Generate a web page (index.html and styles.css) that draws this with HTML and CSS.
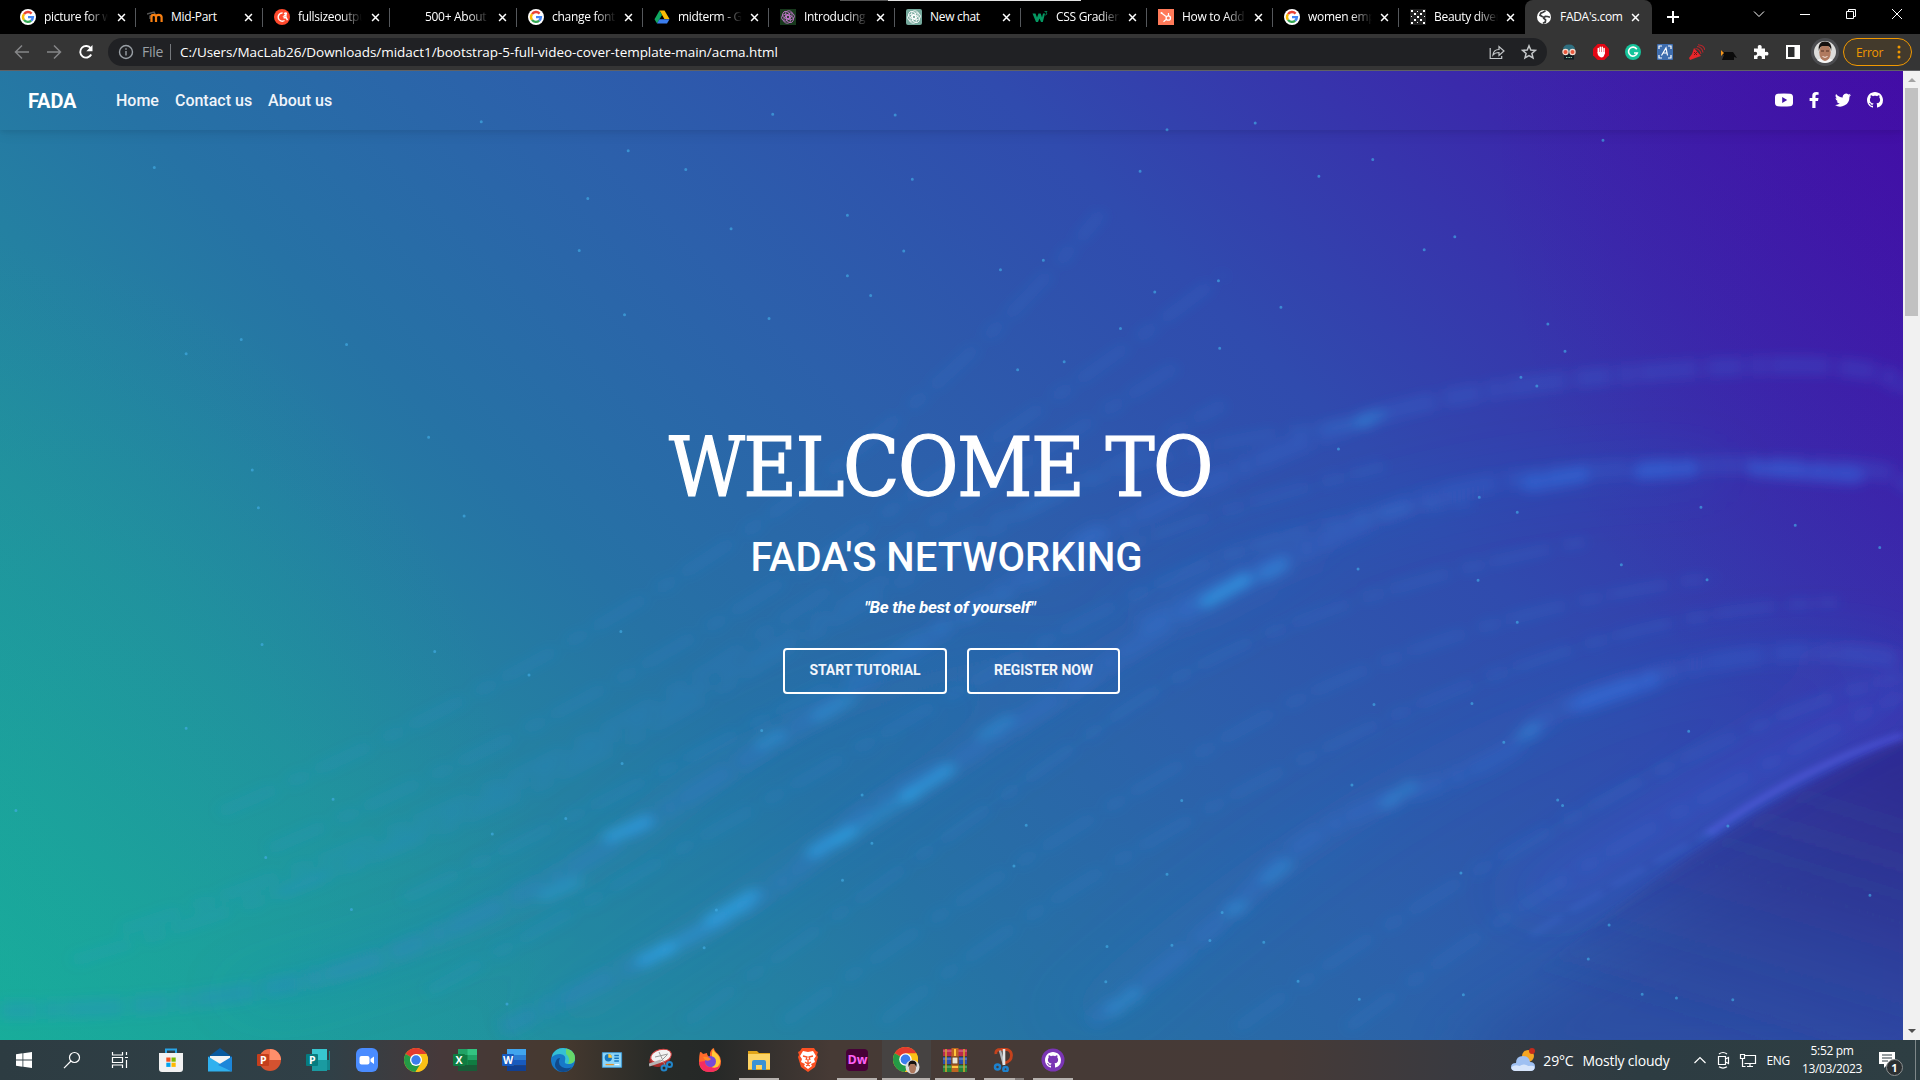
FILE: index.html
```html
<!DOCTYPE html>
<html lang="en">
<head>
<meta charset="utf-8">
<title>FADA's.com</title>
<link rel="stylesheet" href="styles.css">
</head>
<body>
<svg class="defs" width="0" height="0" aria-hidden="true">
  <symbol id="close" viewBox="0 0 10 10"><path d="M1.2 1.2l7.6 7.6M8.8 1.2L1.2 8.8" stroke="#fff" stroke-width="1.7"/></symbol>
  <symbol id="google" viewBox="0 0 16 16"><circle cx="8" cy="8" r="8" fill="#fff"/><g fill="none" stroke-width="2.4"><path d="M4 5.1A4.9 4.9 0 0 1 11.6 4.6" stroke="#ea4335"/><path d="M4 5.1a4.9 4.9 0 0 0 0 5.8" stroke="#fbbc05"/><path d="M4 10.9a4.9 4.9 0 0 0 7.2.7" stroke="#34a853"/><path d="M11.2 11.6A4.9 4.9 0 0 0 12.9 8.1H8" stroke="#4285f4"/></g></symbol>
  <symbol id="knot" viewBox="0 0 16 16"><g fill="none" stroke="currentColor" stroke-width=".8"><path id="loop" d="M8 1.800q3-.6 4 1.800v4L8.200 9.800 5.600 8.300V4Q6 2.200 8 1.800z"/><use href="#loop" transform="rotate(60 8 8)"/><use href="#loop" transform="rotate(120 8 8)"/><use href="#loop" transform="rotate(180 8 8)"/><use href="#loop" transform="rotate(240 8 8)"/><use href="#loop" transform="rotate(300 8 8)"/></g></symbol>
  <symbol id="chrome" viewBox="0 0 24 24"><circle cx="12" cy="12" r="12" fill="#fbc116"/><path d="M12 12L1.6 6A12 12 0 0 1 22.4 6z" fill="#e33b2e"/><path d="M12 12L1.6 6A12 12 0 0 0 11.5 24L17.2 15z" fill="#249a46"/><path d="M12 6h10.4a12 12 0 0 1-10.9 18l5.7-9z" fill="#fbc116"/><circle cx="12" cy="12" r="6" fill="#fff"/><circle cx="12" cy="12" r="4.7" fill="#3b7ded"/></symbol>
  <symbol id="github" viewBox="0 0 16 16"><path fill="currentColor" d="M8 0C3.58 0 0 3.58 0 8c0 3.54 2.29 6.53 5.47 7.59.4.07.55-.17.55-.38 0-.19-.01-.82-.01-1.49-2.01.37-2.53-.49-2.69-.94-.09-.23-.48-.94-.82-1.13-.28-.15-.68-.52-.01-.53.63-.01 1.08.58 1.23.82.72 1.21 1.87.87 2.33.66.07-.52.28-.87.51-1.07-1.78-.2-3.64-.89-3.64-3.95 0-.87.31-1.59.82-2.15-.08-.2-.36-1.02.08-2.12 0 0 .67-.21 2.2.82.64-.18 1.32-.27 2-.27s1.36.09 2 .27c1.53-1.04 2.2-.82 2.2-.82.44 1.1.16 1.92.08 2.12.51.56.82 1.27.82 2.15 0 3.07-1.87 3.75-3.65 3.95.29.25.54.73.54 1.48 0 1.07-.01 1.93-.01 2.2 0 .21.15.46.55.38A8.01 8.01 0 0 0 16 8c0-4.42-3.58-8-8-8z"/></symbol>
</svg>

<header class="tabstrip">
  <i class="edge-line"></i>
  <div class="tabs">
    <div class="tab wide"><svg class="fav"><use href="#google"/></svg><span class="title">picture for w</span><svg class="x"><use href="#close"/></svg></div>
    <div class="tab wide"><svg class="fav" viewBox="0 0 16 16"><path d="M0 5l7-2 1 2-5 2v3" fill="none" stroke="#555" stroke-width="1.4"/><path d="M4.500 13V8q0-2.200 2.200-2.200T9 8v5M9 13V8q0-2.200 2.600-2.200T14.600 8v5" fill="none" stroke="#f98012" stroke-width="2.200"/></svg><span class="title full">Mid-Part</span><svg class="x"><use href="#close"/></svg></div>
    <div class="tab wide"><svg class="fav" viewBox="0 0 16 16"><circle cx="8" cy="8" r="8" fill="#ff492c"/><path d="M8.600 4A4.100 4.100 0 1 0 10.500 11.500M10 4.600q2.600-1.500 2.400.4L10.200 7h2.600M9.500 8.800h2.700l1.300 2.300" fill="none" stroke="#fff" stroke-width="1.400"/></svg><span class="title">fullsizeoutpu</span><svg class="x"><use href="#close"/></svg></div>
    <div class="tab wide"><i class="fav"></i><span class="title">500+ About</span><svg class="x"><use href="#close"/></svg></div>
    <div class="tab"><svg class="fav"><use href="#google"/></svg><span class="title">change font</span><svg class="x"><use href="#close"/></svg></div>
    <div class="tab"><svg class="fav" viewBox="0 0 16 16"><path d="M5.500 1.500h5L15.500 10H10.400z" fill="#fbbc05"/><path d="M5.500 1.500L8 5.900 3 14.500.5 10.200z" fill="#11a861"/><path d="M5.400 10.200h10.100L13 14.500H3z" fill="#3b7ded"/></svg><span class="title">midterm - G</span><svg class="x"><use href="#close"/></svg></div>
    <div class="tab"><svg class="fav purple"><use href="#knot"/></svg><span class="title">Introducing</span><svg class="x"><use href="#close"/></svg></div>
    <div class="tab"><svg class="fav mint"><use href="#knot"/></svg><span class="title full">New chat</span><svg class="x"><use href="#close"/></svg></div>
    <div class="tab"><svg class="fav" viewBox="0 0 16 16"><path d="M.5 4.500h3L5 8.500 6.500 4.500h2.200L10 8.500l1-4h2l-2.200 8.500H9L7.500 9.500 6 13H4z" fill="#059862"/><path d="M12.500 2.500h2.500l-1.200 1.500q1.600.2.800 1.500-.8.8-2 .2" fill="none" stroke="#059862" stroke-width=".8"/></svg><span class="title">CSS Gradien</span><svg class="x"><use href="#close"/></svg></div>
    <div class="tab"><svg class="fav" viewBox="0 0 16 16"><path d="M0 0h16v16H0z" fill="#ff7a59"/><path d="M3.500 4l4.500 3.500M10.500 4v3M8 10.500L5.500 12.800" stroke="#fff" stroke-width="1.200"/><circle cx="10.300" cy="9" r="2.200" fill="none" stroke="#fff" stroke-width="1.300"/><circle cx="3.500" cy="4" r="1" fill="#fff"/></svg><span class="title">How to Add</span><svg class="x"><use href="#close"/></svg></div>
    <div class="tab"><svg class="fav"><use href="#google"/></svg><span class="title">women emp</span><svg class="x"><use href="#close"/></svg></div>
    <div class="tab last"><svg class="fav" viewBox="0 0 16 16"><path d="M0 0h16v16H0z" fill="#202020"/><path d="M1 1h2v2H1zM13 1h2v2h-2zM4 4h2v2H4zM10 4h2v2h-2zM7 7h2v2H7zM4 10h2v2H4zM10 10h2v2h-2zM1 13h2v2H1zM13 13h2v2h-2zM1 7h1v1H1zM14 7h1v1h-1zM7 2h1v1H7zM7 13h1v1H7z" fill="#fff"/></svg><span class="title">Beauty diver</span><svg class="x"><use href="#close"/></svg></div>
    <div class="tab active"><svg class="fav" viewBox="0 0 16 16"><circle cx="8" cy="8" r="7" fill="#fff"/><path d="M9.500 1.800L7 3.200 4.800 4.200 4 6.300l2.500 1.500 2.700.4M14 8.300l-2.500-.8-2.200-.2-1.500 2 1.800 1.500-.3 2.300L7 14.300" fill="none" stroke="#3a3b3c" stroke-width="1.700"/></svg><span class="title full">FADA's.com</span><svg class="x"><use href="#close"/></svg></div>
  </div>
  <svg class="plus" viewBox="0 0 12 12"><path d="M6 0v12M0 6h12" stroke="#fff" stroke-width="2"/></svg>
  <div class="winctl">
    <svg viewBox="0 0 12 12"><path d="M1 3.500l5 5 5-5" /></svg>
    <svg viewBox="0 0 12 12"><path d="M1 6.500h10"/></svg>
    <svg viewBox="0 0 12 12"><path d="M1.500 3.500h7v7h-7zM3.500 3.500v-2h7v7h-2"/></svg>
    <svg viewBox="0 0 12 12"><path d="M1 1l10 10M11 1L1 11"/></svg>
  </div>
</header>

<div class="toolbar">
  <svg class="nav dim" viewBox="0 0 16 16"><path d="M15 8H2M8 1.500L1.500 8 8 14.500"/></svg>
  <svg class="nav dim" viewBox="0 0 16 16"><path d="M1 8h13M8 1.500L14.500 8 8 14.500"/></svg>
  <svg class="nav" viewBox="0 0 16 16"><path d="M13.200 10.500A5.800 5.800 0 1 1 12.800 4.500"/><path d="M14.500 1v6.200H8.300z" fill="#fff" stroke="none"/></svg>
  <div class="omnibox">
    <svg class="info" viewBox="0 0 16 16"><circle cx="8" cy="8" r="6.500"/><path d="M8 7v4.500M8 4.200v1.600"/></svg>
    <span class="scheme">File</span>
    <span class="url">C:/Users/MacLab26/Downloads/midact1/bootstrap-5-full-video-cover-template-main/acma.html</span>
    <svg class="act" viewBox="0 0 16 16"><path d="M1.200 4v10.500h11.500v-2.500M4 11q.5-5.500 6-5.500V2.500l5 4.500-5 4.500V8.500q-4 0-6 2.500z"/></svg>
    <svg class="act star" viewBox="0 0 16 16"><path d="M8 1.800l1.800 4.200 4.600.4-3.500 3 1.100 4.500-4-2.400-4 2.400 1.100-4.500-3.500-3 4.600-.4z"/></svg>
  </div>
  <div class="exts">
    <svg viewBox="0 0 16 16"><path d="M2 6q0-5.500 6-5.500T14 6v2H2z" fill="#2f6f80"/><path d="M3 9h10v6.500H3z" fill="#101c22"/><circle cx="4.500" cy="8" r="2.600" fill="#e9583c" stroke="#f7ddd0" stroke-width="1.200"/><circle cx="11.500" cy="8" r="2.600" fill="#e9583c" stroke="#f7ddd0" stroke-width="1.200"/><path d="M5 13.500h6" stroke="#9db" stroke-dasharray="1 .6"/></svg>
    <svg viewBox="0 0 16 16"><path d="M4.700 0h6.600L16 4.700v6.600L11.300 16H4.700L0 11.300V4.700z" fill="#e30613"/><path d="M5.300 4.500v4M7.300 3.200v5M9.300 3.200v5M11.100 4.500v5" stroke="#fff" stroke-width="1.500" stroke-linecap="round"/><path d="M4.600 8h7.200q0 5.500-3.800 5.500Q5.500 13 4.600 10z" fill="#fff"/></svg>
    <svg viewBox="0 0 16 16"><circle cx="8" cy="8" r="8" fill="#15c39a"/><path d="M11.800 5.200A4.500 4.500 0 1 0 12.300 9H9" fill="none" stroke="#fff" stroke-width="1.600"/></svg>
    <svg viewBox="0 0 16 16"><rect width="16" height="16" rx="1" fill="#3e6dae"/><path d="M2 5V2h3M11 2h3v3M2 11v3h3M11 14h3v-3M4.500 11.500L9 4l1.500 7.500M6.500 9H10" fill="none" stroke="#fff" stroke-width="1.200"/></svg>
    <svg viewBox="0 0 16 16"><path d="M5 4l7 8-3 1-8 3-1-2 3-4z" fill="#e8262b"/><path d="M6.500 4.500Q11 5 12 10M8 2.500q5 .5 6 6M9 .7q6 .3 6.800 5.300" fill="none" stroke="#b8262b" stroke-width="1.100"/><path d="M5 8l3 3M8 8l-3 3" stroke="#701114"/></svg>
    <svg viewBox="0 0 16 16"><path d="M0 6l3 2h9l4 6-3-1v3H1l2-5-3-1z" fill="#0b0b0b"/><path d="M0 6l3 3-3 3z" fill="#f3961c"/></svg>
    <svg viewBox="0 0 16 16"><path d="M1 4.500h4Q4 1 6.700 1t1.800 3.500H12V8q3.500-1 3.500 1.700T12 11.300V15H8.700q.8-3.300-2-3.300T4.500 15H1v-3.700q3.200.5 3.200-1.700T1 8z" fill="#fff"/></svg>
    <svg viewBox="0 0 16 16"><path d="M1 1h14v14H1z" fill="#fff"/><path d="M3 3h6.500v10H3z" fill="#2c2d2f"/></svg>
    <svg class="avatar" viewBox="0 0 28 28"><circle cx="14" cy="14" r="14" fill="#4b4c4f"/><circle cx="14" cy="14" r="11" fill="#dcdcda"/><path d="M6 22q8-5 16 0-8 6-16 0z" fill="#f5f5f5"/><ellipse cx="14" cy="14.500" rx="5.700" ry="8.500" fill="#b07a5f"/><path d="M7.800 13Q6.500 3.500 14 3.500T20.200 13q-.5-4-3-5H11Q8.500 9 7.800 13z" fill="#16110f"/><path d="M10 13h3M15 13h3" stroke="#47281e" stroke-width=".9"/><path d="M11.500 18.500q2.500 1.800 5 0" stroke="#f5e4dc" fill="none"/></svg>
  </div>
  <div class="error"><span>Error</span><svg viewBox="0 0 4 14"><circle cx="2" cy="2" r="1.500"/><circle cx="2" cy="7" r="1.500"/><circle cx="2" cy="12" r="1.500"/></svg></div>
</div>

<main class="view">
  <section class="page">
    <svg class="video" viewBox="0 2 1554 1566" preserveAspectRatio="none" aria-hidden="true">
      <defs>
        <filter id="soft" x="-10%" y="-10%" width="120%" height="120%"><feGaussianBlur stdDeviation="5 9"/></filter>
        <filter id="rim" x="-10%" y="-10%" width="120%" height="120%"><feGaussianBlur stdDeviation="3 5"/></filter>
        <filter id="wide" x="-20%" y="-20%" width="140%" height="140%"><feGaussianBlur stdDeviation="26 40"/></filter>
        <linearGradient id="planet" gradientUnits="userSpaceOnUse" x1="1554" y1="1150" x2="1330" y2="1520"><stop offset="0" stop-color="#2d2787" stop-opacity=".65"/><stop offset=".45" stop-color="#2d3088" stop-opacity=".45"/><stop offset="1" stop-color="#2c4a95" stop-opacity="0"/></linearGradient>
      </defs>
      <path d="M1200 1568Q1390 1330 1600 1120V1620H1200z" fill="#2c3a92" opacity=".35" filter="url(#wide)"/>
      <path d="M1230 1500Q1420 1170 1600 1050V1700H1200z" fill="url(#planet)" filter="url(#rim)"/>
      <g class="haze" filter="url(#wide)">
        <path d="M200 1500Q420 1400 540 1200T850 950"/><path d="M450 1540Q650 1290 820 1060T1060 790"/><path d="M880 1540Q1080 1190 1260 1040T1554 960"/><path d="M950 880Q1150 640 1400 650"/><path class="violet" d="M1250 1350Q1380 1180 1554 1000"/>
      </g>
      <g class="streaks" filter="url(#soft)">
        <path class="faint" d="M180 1200Q420 1000 600 760T900 230"/>
        <path class="faint" d="M220 1260Q460 1060 660 800T1000 330"/>
        <path class="faint" d="M100 1390Q400 1200 600 940T960 480"/>
        <path class="faint" d="M60 1440Q380 1250 590 1000T1000 540"/>
        <path class="faint" d="M230 1330Q500 1100 700 850T1120 570"/>
        <path class="faint" d="M330 1340Q570 1110 740 930T1130 640"/>
        <path class="faint" d="M350 1490Q620 1190 830 950T1200 700"/>
        <path class="faint" d="M560 1540Q760 1260 900 1060T1300 760"/>
        <path class="faint" d="M640 1540Q840 1260 1010 1070T1400 820"/>
        <path class="faint" d="M720 1540Q880 1290 1100 1080T1500 860"/>
        <path class="faint" d="M1010 1550Q1150 1350 1300 1190T1554 980"/>
        <path class="faint" d="M1100 1550Q1250 1330 1380 1190T1554 1010"/>
        <path class="mid" d="M0 1520Q210 1520 330 1420T520 1225Q640 1080 720 970T900 740"/>
        <path class="mid" d="M410 1550L530 1435Q630 1340 670 1260T770 1130Q830 1060 920 940T1050 800"/>
        <path class="mid" d="M890 1540Q990 1400 1030 1310T1150 1170 1250 1070 1370 970 1554 955"/>
        <path class="mid" d="M880 770Q1010 640 1100 575T1370 485 1554 520"/>
        <path class="mid" d="M930 900Q1070 770 1140 710T1390 640 1554 680"/>
        <path class="glow" d="M498 1240L528 1215M664 1265l30-34M740 1175l35-45M525 1440l22-22M580 1375l35-42M985 860l32-36"/>
        <path class="glow dimmer" d="M622 1090l14-14M668 1045l25-28M445 1335l25-22M803 1076l20-25M1004 1360l10-10M1132 1185l20-28M1243 1078l10-15M1110 570l15-12M1035 1308l16-24M908 1520l20-28M1032 818l15-18M540 1425l70-75M685 1245l60-75"/>
        <path class="glow blue" d="M1290 1025l58-38M1250 670l40-15M1340 650l40-5M1435 645l80 12"/>
      </g>
      <path class="globe" filter="url(#rim)" d="M1395 1235Q1470 1128 1554 1075"/>
      <path class="globe thin-rim" filter="url(#rim)" d="M1250 1400Q1320 1310 1400 1230"/>
      <path class="dots" d="M513 131h0M560 161h0M631 72h0M393 84h0M731 73h0M953 97h0M1025 86h0M1121 145h0M1309 114h0M931 164h0M1077 172h0M745 177h0M126 158h0M480 208h0M597 257h0M692 235h0M473 292h0M738 293h0M852 308h0M817 323h0M1188 270h0M1163 291h0M692 333h0M711 365h0M995 341h0M628 402h0M510 396h0M943 359h0M1046 384h0M1264 411h0M915 418h0M197 436h0M283 444h0M152 459h0M996 450h0M869 472h0M831 485h0M1278 455h0M1242 497h0M1255 511h0M350 594h0M206 647h0M211 708h0M379 721h0M1208 691h0M1093 613h0M1389 707h0M1466 736h0M1239 715h0M1535 772h0M1324 800h0M1394 824h0M1207 825h0M1109 807h0M214 929h0M355 940h0M507 908h0M432 978h0M1239 893h0M152 1064h0M622 1068h0M508 1121h0M1122 1026h0M1202 1024h0M1379 1069h0M1228 1087h0M13 1197h0M272 1179h0M462 1210h0M402 1235h0M704 1172h0M838 1221h0M965 1181h0M1104 1156h0M1272 1180h0M1276 1189h0M1411 1222h0M217 1273h0M828 1287h0M688 1310h0M287 1357h0M953 1300h0M1193 1298h0M585 1358h0M712 1250h0M998 1362h0M988 1407h0M904 1417h0M575 1419h0M957 1415h0M1032 1410h0M1314 1382h0M1527 1334h0M1415 1503h0M1195 1495h0M1341 1494h0M1369 1500h0M1060 1473h0M903 1474h0M1110 1502h0M1297 1437h0M414 1510h0"/>
    </svg>
    <nav class="navbar">
      <a class="brand">FADA</a><a class="link">Home</a><a class="link">Contact us</a><a class="link">About us</a>
      <div class="social">
        <svg width="18" height="14" viewBox="0 0 18 14"><path fill-rule="evenodd" d="M3 .8Q9 0 15 .8 18 1 18 4v6q0 3-3 3.200-6 .8-12 0Q0 13 0 10V4Q0 1 3 .8zM7.200 4v6l5-3z" fill="#fff"/></svg>
        <svg width="10" height="16" viewBox="0 0 10 16"><path d="M9 9l.5-3H6.500V4.200q0-1.400 1.500-1.400h1.600V.3Q3.300-1 3.300 3.800V6H.6v3h2.700v7h3.200V9z" fill="#fff"/></svg>
        <svg width="16" height="16" viewBox="0 0 16 16"><path d="M14.400 4.700c.6-.4 1.100-1 1.600-1.700-.6.300-1.200.4-1.900.5.700-.4 1.200-1 1.400-1.800-.6.400-1.300.6-2.100.8A3.300 3.300 0 0 0 7.800 5.500 9.300 9.300 0 0 1 1.100 2a3.300 3.300 0 0 0 1 4.400c-.5 0-1-.2-1.500-.4 0 1.600 1.100 2.900 2.600 3.200-.5.100-1 .2-1.500.1a3.300 3.300 0 0 0 3.100 2.300A6.600 6.600 0 0 1 0 13a9.300 9.300 0 0 0 14.400-8.300z" fill="#fff"/></svg>
        <svg width="16" height="16"><use href="#github"/></svg>
      </div>
    </nav>
    <div class="hero">
      <h1>WELCOME TO</h1>
      <h2>FADA'S NETWORKING</h2>
      <p class="tagline">"Be the best of yourself"</p>
      <div class="buttons"><a class="btn tutorial">START TUTORIAL</a><a class="btn register">REGISTER NOW</a></div>
    </div>
  </section>
  <aside class="scrollbar"><i class="up"></i><i class="thumb"></i><i class="down"></i></aside>
</main>

<footer class="taskbar">
  <div class="sys">
    <svg viewBox="0 0 16 16" width="16" height="18"><path d="M0 2.200l6.500-.9v6.300H0zM7.300 1.200L16 0v7.600H7.300zM0 8.400h6.500v6.300L0 13.800zM7.300 8.400H16V16l-8.700-1.200z" fill="#fff"/></svg>
    <svg viewBox="0 0 18 18" width="18" height="18" class="thin"><circle cx="11.500" cy="6.500" r="5"/><path d="M8 10L1 17.200"/></svg>
    <svg viewBox="0 0 18 18" width="18" height="18" class="thin"><path d="M1.500 1v3h10V1M1.500 17v-3h10v3M1.500 6.500h10v5h-10zM15.500 1v3M15.500 9v8M14 6.500h3" /></svg>
  </div>
  <div class="apps">
    <span class="app"><svg viewBox="0 0 24 24"><path d="M7 7V1.500h10V7" fill="none" stroke="#29a5e8" stroke-width="2"/><path d="M0 5h24v16q0 3-3 3H3q-3 0-3-3z" fill="#f2f2f2"/><path d="M7.300 9.500h4.200v4.200H7.300z" fill="#f25022"/><path d="M12.500 9.500h4.200v4.200h-4.200z" fill="#7fba00"/><path d="M7.300 14.700h4.200v4.200H7.300z" fill="#00a4ef"/><path d="M12.500 14.700h4.200v4.200h-4.200z" fill="#ffb900"/></svg></span>
    <span class="app"><svg viewBox="0 0 24 24"><path d="M0 9L12 0l12 9v14H0z" fill="#0a5a9e"/><path d="M2 8h20v8H2z" fill="#f4f4f4"/><path d="M0 8.500L14 17 24 23.500H0z" fill="#2fb1ef"/><path d="M24 8.500L10 17l14 6.500z" fill="#1c86d9"/></svg></span>
    <span class="app"><svg viewBox="0 0 24 24"><circle cx="13" cy="12" r="11" fill="#d35230"/><path d="M13 1a11 11 0 0 1 11 11H13z" fill="#ff8f6b"/><path d="M13 1v11H2A11 11 0 0 1 13 1z" fill="#ed6c47"/><rect y="6" width="12" height="12" rx="1" fill="#c43e1c"/><text x="3" y="15.500">P</text></svg></span>
    <span class="app"><svg viewBox="0 0 24 24"><path d="M6 1h15v11H6z" fill="#37c6d0"/><path d="M9 12h14V3h1v19H9z" fill="#12888f"/><path d="M6 12h15v11H6z" fill="#1a9ba1"/><rect y="6" width="12" height="12" rx="1" fill="#067c80"/><text x="3" y="15.500">P</text></svg></span>
    <span class="app"><svg viewBox="0 0 24 24"><rect x="1" width="22" height="24" rx="6" fill="#4a8cff"/><rect x="4.500" y="8" width="10" height="8.500" rx="2" fill="#fff"/><path d="M15.500 11L19 8.500v7.500l-3.500-2.500z" fill="#fff"/></svg></span>
    <span class="app"><svg><use href="#chrome"/></svg></span>
    <span class="app"><svg viewBox="0 0 24 24"><path d="M5 1h19v22H5z" fill="#21a366"/><path d="M14.500 1H24v6h-9.500z" fill="#33c481"/><path d="M5 7h9.500v10H5z" fill="#107c41"/><path d="M5 17h19v6H5z" fill="#185c37"/><path d="M14.500 12H24v5h-9.500z" fill="#107c41"/><rect y="6" width="12" height="12" rx="1" fill="#107c41"/><text x="2.500" y="15.500">X</text></svg></span>
    <span class="app"><svg viewBox="0 0 24 24"><path d="M5 1h19v6H5z" fill="#41a5ee"/><path d="M5 7h19v5H5z" fill="#2b7cd3"/><path d="M5 12h19v5.500H5z" fill="#185abd"/><path d="M5 17.500h19V23H5z" fill="#103f91"/><rect y="6" width="12" height="12" rx="1" fill="#185abd"/><text x="1" y="15.500">W</text></svg></span>
    <span class="app"><svg viewBox="0 0 24 24"><circle cx="12" cy="12" r="12" fill="#1779c8"/><path d="M1 8Q4 0 12 0q11 0 12 10 0 6-7 6-4 0-3-3 2-6-5-7Q4 6 1 9z" fill="#35c1d4"/><path d="M15 .5q9 2 9 10 0 5-7 5.500 3-6-2-10z" fill="#66d86a"/><path d="M9 10q-3 6 2 9 5 2.500 10 0-5 7-13 4-6-4-3-10 1-3 4-3z" fill="#114a8b"/></svg></span>
    <span class="app"><svg class="card" viewBox="0 0 24 24"><path d="M1.500 4h21v16h-21z" fill="#8ed6fa" stroke="#3e9edb"/><circle cx="8" cy="9.500" r="4" fill="#1677bf"/><path d="M8 9.500v-4a4 4 0 0 1 4 4z" fill="#ffc83d"/><path d="M14.500 7h5M14.500 10h5M14.500 13h5" stroke="#1677bf" stroke-width="1.600"/><path d="M5 17h9" stroke="#e5932c" stroke-width="1.400"/><path d="M15 17h5" stroke="#fff"/></svg></span>
    <span class="app"><svg viewBox="0 0 24 24"><ellipse cx="11" cy="11" rx="11" ry="7.500" fill="#a52d2b" transform="rotate(-18 11 11)"/><ellipse cx="12" cy="8" rx="10.500" ry="6.500" fill="#f3f3f3" stroke="#d34140" transform="rotate(-15 12 8)"/><path d="M6 9l13-3M10 4l6 13M18 7l-8 8" stroke="#999"/><path d="M0 17l12-4" stroke="#b5b5b5" stroke-width="3"/><g fill="none" stroke="#2185c9" stroke-width="2"><circle cx="15" cy="20" r="2.500"/><circle cx="20.500" cy="16.500" r="2.500"/></g></svg></span>
    <span class="app"><svg viewBox="0 0 24 24"><path d="M2 4q2 0 3 2l4-1q0 3 3 4V5q1-4 4-5 0 3 4 6 3 3 3 7 0 11-11 11T1 13Q1 8 2 4z" fill="#ff6a2b"/><path d="M15 0q0 3 4 6 4 4 3 9-3 7-8 5V5z" fill="#ffca36"/><path d="M1 14q1 10 11 10 7 0 10-6-5 3-9 1-6 1-6-6z" fill="#f52c61"/><circle cx="12.500" cy="13.500" r="5.500" fill="#7849d7"/><path d="M5 9q5-1 8 2-2 3-6 1z" fill="#ff8a27"/></svg></span>
    <span class="app run"><svg viewBox="0 0 24 24"><path d="M1 3h9l2 2h11v17H1z" fill="#e2a51a"/><path d="M1 6h22v15H1z" fill="#fdd465"/><path d="M5 22v-8q0-2 2-2h10q2 0 2 2v8h-4v-5H9v5z" fill="#3b92d4"/></svg></span>
    <span class="app"><svg viewBox="0 0 24 24"><path d="M6 0h12l2 3 2 1-1 3 1 2-3 10-7 5-7-5L2 9l1-2-1-3 2-1z" fill="#fb5123"/><path d="M12 4l5-1 3 5-2 3 1 3-4 2 1 2-4 3-4-3 1-2-4-2 1-3-2-3 3-5z" fill="#fff"/><path d="M7 8l4 1-1 3M17 8l-4 1 1 3M12 11v4M9 14l3 2 3-2M10 18l2-1 2 1" fill="none" stroke="#fb5123" stroke-width="1.300"/></svg></span>
    <span class="app run"><svg viewBox="0 0 24 24"><rect x="1" y="1" width="22" height="22" rx="4" fill="#470137"/><text class="dw" x="2.500" y="16">Dw</text></svg></span>
    <span class="app run current"><svg viewBox="0 0 28 28" class="big"><use href="#chrome" x="1" y="1" width="25" height="25"/><circle cx="20.500" cy="21" r="7" fill="#ddd"/><ellipse cx="20.500" cy="22" rx="3.500" ry="5.500" fill="#ad795f"/><path d="M16.500 21q-1-6.500 4-6.500t4 6.500l-2-3h-4z" fill="#17110e"/></svg></span>
    <span class="app run"><svg viewBox="0 0 24 24"><path d="M0 1h24v7H0z" fill="#b9294e"/><path d="M0 9h24v7H0z" fill="#294fb0"/><path d="M0 17h24v7H0z" fill="#25833a"/><path d="M0 3h24M0 11h24M0 19h24" stroke="#ffffff66"/><path d="M3 1v23M21 1v23" stroke="#d3a52c" stroke-width="1.500"/><path d="M8.500 0h7v24h-7z" fill="#bd6421"/><path d="M9 9h6v7H9z" fill="#e9e4d4" stroke="#6c3a14"/><path d="M12 1v7M9 19h6" stroke="#ffc53d" stroke-width="2"/></svg></span>
    <span class="app run split"><svg viewBox="0 0 24 24"><path d="M4 6Q3 1.500 9 1.500q10-1.500 10.500 5.500 0 7-7.500 8" fill="none" stroke="#c5421c" stroke-width="2.800"/><path d="M8 2.500l4 14.500" stroke="#aeb4b8" stroke-width="2.400"/><path d="M12 1v16" stroke="#e3e6e8" stroke-width="2.600"/><g fill="none" stroke="#1d82cf" stroke-width="2.500"><circle cx="5.500" cy="19" r="2.500"/><circle cx="13.500" cy="21.200" r="2.200"/></g></svg></span>
    <span class="app run"><svg viewBox="0 0 24 24" class="hub"><circle cx="12" cy="12" r="11.500" fill="#7a35b4"/><use href="#github" x="4" y="4" width="16" height="16"/></svg></span>
  </div>
  <div class="weather"><svg viewBox="0 0 24 24"><circle cx="17" cy="8" r="6" fill="#f5a623"/><circle cx="21" cy="3" r="3" fill="#c42b1c"/><path d="M5 23q-5 0-5-4t5-4q0-7 7-7 6 0 7 6 5 0 5 4.500T19 23z" fill="#9fc0f2"/><path d="M4 23q-4-1-3.500-4 4-3 8-1 4-3 9 0 5-1 6 1 0 4-4.500 4z" fill="#d7e5fb"/></svg><span>29°C</span><span>Mostly cloudy</span></div>
  <div class="tray">
    <svg class="thin" viewBox="0 0 14 14"><path d="M1.500 10L7 4.500l5.500 5.500"/></svg>
    <svg class="thin" viewBox="0 0 14 18"><path d="M2.500 5.500h7v8h-7zM9.500 8l3-1.500v6l-3-1.500M3 3q4-3 8 0M3 15.800q4 2.500 8 0"/></svg>
    <svg class="thin" viewBox="0 0 18 16"><path d="M5.500 3.500h11v8h-11M8 14.500h6M11 11.500v3M1.500 2.500h4v4h-4zM3.500 6.500v8h3"/></svg>
    <span>ENG</span>
  </div>
  <div class="clock"><span>5:52 pm</span><span>13/03/2023</span></div>
  <div class="notice"><svg viewBox="0 0 26 26"><path d="M1 2h16v12H10l-4 4v-4H1z" fill="#fff"/><path d="M4 5h10M4 8h10M4 11h6" stroke="#2c3a40"/></svg><b>1</b></div>
</footer>
</body>
</html>
```
FILE: styles.css
```css
* { box-sizing: border-box; }
html, body { margin: 0; width: 1920px; height: 1080px; overflow: hidden; background: #000; }
body { display: flex; flex-direction: column; font-family: "Open Sans", "Noto Sans", sans-serif; color: #fff; }
svg { flex: none; display: block; }
.defs { position: absolute; }

/* browser tabs */
.tabstrip { position: relative; height: 34px; flex: none; display: flex; background: #000; }
.edge-line { position: absolute; left: 840px; top: 0; width: 241px; height: 1px; background: linear-gradient(90deg, #555 48px, #e4e4e4 48px); }
.tabs { display: flex; padding-left: 9px; }
.tab { width: 126px; height: 34px; display: flex; align-items: center; padding: 0 10px 0 11px; position: relative; }
.tab.wide { width: 127px; }
.tab::after { content: ""; position: absolute; right: 0; top: 8px; width: 1px; height: 19px; background: #55585c; }
.tab.last::after, .tab.active::after { display: none; }
.fav { width: 16px; height: 16px; margin-right: 8px; flex: none; }
.purple { background: #17381c; color: #c277cc; }
.mint { background: #75a99c; color: #fff; border-radius: 2px; }
.title { width: 66px; overflow: hidden; white-space: nowrap; font-size: 12px; line-height: 18px; letter-spacing: -.3px; -webkit-mask-image: linear-gradient(90deg, #000 65%, transparent 97%); mask-image: linear-gradient(90deg, #000 65%, transparent 97%); }
.title.full { -webkit-mask-image: none; mask-image: none; }
.x { width: 9px; height: 9px; margin-left: auto; }
.tab.active { width: 127px; background: #353535; border-radius: 8px 8px 0 0; padding: 0 12px 0 11px; }
.plus { width: 12px; height: 12px; margin: 11px 0 0 15px; }
.winctl { margin-left: auto; display: flex; gap: 34px; padding: 8px 17px 0 0; }
.winctl svg { width: 12px; height: 12px; fill: none; stroke: #fff; }

/* address row */
.toolbar { height: 37px; flex: none; display: flex; align-items: center; background: #353535; border-bottom: 1px solid #606164; padding: 0 8px 0 14px; }
.nav { width: 16px; height: 16px; margin-right: 16px; fill: none; stroke: #fff; stroke-width: 1.900; }
.nav.dim { stroke: #858688; stroke-width: 1.500; }
.toolbar .nav:nth-child(3) { margin-right: 14px; }
.omnibox { width: 1439px; height: 28px; border-radius: 14px; background: #202124; display: flex; align-items: center; padding: 0 10px; }
.info { width: 16px; height: 16px; fill: none; stroke: #9aa0a6; stroke-width: 1.400; }
.scheme { font-size: 14px; line-height: 15px; color: #9aa0a6; margin-left: 8px; width: 29px; border-right: 1px solid #75787c; height: 16px; letter-spacing: -.3px; }
.url { font-size: 13.500px; line-height: 18px; margin-left: 9px; white-space: nowrap; letter-spacing: -.04px; }
.act { width: 16px; height: 16px; margin-left: auto; fill: none; stroke: #c4c7c9; stroke-width: 1.200; }
.star { margin-left: 16px; stroke-width: 1.500; }
.exts { display: flex; align-items: center; gap: 16px; padding-left: 14px; }
.exts svg { width: 16px; height: 16px; }
.exts .avatar { width: 28px; height: 28px; margin-left: -6px; }
.error { margin-left: auto; width: 69px; height: 28px; border: 1px solid #f29900; border-radius: 14px; background: #433a2c; color: #f29900; font-size: 12px; display: flex; align-items: center; justify-content: space-between; padding: 0 10px 0 12px; letter-spacing: -.3px; }
.error svg { width: 4px; height: 14px; fill: #f29900; }

/* web page */
.view { flex: 1; display: flex; min-height: 0; }
.page { flex: 1; position: relative; display: flex; flex-direction: column; overflow: hidden; font-family: Roboto, sans-serif;
  background: radial-gradient(ellipse 420px 700px at 100% 0, rgba(68,6,165,.3), transparent), radial-gradient(ellipse 560px 800px at 0 100%, rgba(20,180,150,.35), transparent), linear-gradient(45deg, #1aa99d 0%, #228e9f 20%, #2672a5 37%, #2c60ab 52%, #304bae 68%, #3a2aab 84%, #420fa6 100%); }
.video { position: absolute; left: 0; top: 0; width: 100%; height: 100%; }
.haze path { fill: none; stroke: #2c78cc; stroke-width: 50; opacity: .15; }
.haze .violet { stroke: #4450dd; opacity: .3; }
.streaks path { fill: none; stroke: #3b8ee0; vector-effect: non-scaling-stroke; }
.streaks .faint { stroke-width: 12; opacity: .13; stroke-dasharray: 60 14 22 8; }
.streaks .mid { stroke: #3b7fe0; stroke-width: 19; opacity: .2; stroke-dasharray: 38 6 16 4 60 8; }
.streaks .glow { stroke: #31a5ea; stroke-width: 13; opacity: .6; stroke-linecap: round; }
.streaks .dimmer { opacity: .32; }
.streaks .blue { stroke: #347cec; opacity: .35; stroke-width: 18; }
.globe { fill: none; stroke: #5b63ee; stroke-width: 9; opacity: .5; }
.thin-rim { stroke: #4a7be6; stroke-width: 7; opacity: .2; stroke-dasharray: 40 12; }
.dots { fill: none; stroke: #43aee6; stroke-width: 3; stroke-linecap: round; vector-effect: non-scaling-stroke; opacity: .65; }
.navbar { position: relative; height: 59px; flex: none; display: flex; align-items: center; padding: 0 20px 0 28px; box-shadow: 0 4px 12px rgba(0,0,0,.07), 0 2px 4px rgba(0,0,0,.05); }
.brand { font-size: 20px; font-weight: 700; letter-spacing: -.1px; width: 88px; padding-top: 1px; }
.link { font-size: 16px; font-weight: 500; margin-right: 16px; color: #f0f4fa; }
.social { margin: 0 0 2px auto; display: flex; align-items: center; gap: 16px; color: #fff; }
.hero { position: relative; display: flex; flex-direction: column; align-items: center; padding-top: 289px; text-align: center; }
h1, h2, p { margin: 0; white-space: nowrap; }
h1 { font: 400 82px/98px "DejaVu Serif Condensed", "DejaVu Serif", serif; font-stretch: condensed; letter-spacing: -1.500px; margin-right: 22px; -webkit-text-stroke: 1.200px #fff; }
h2 { font-size: 40px; font-weight: 500; line-height: 48px; margin: 17px 10px 0 0; }
.tagline { font-size: 17px; font-weight: 700; font-style: italic; line-height: 24px; margin: 13px 3px 0 0; letter-spacing: -.3px; }
.buttons { display: flex; gap: 20px; margin-top: 29px; }
.btn { height: 46px; border: 2px solid #fff; border-radius: 4px; font-size: 14px; font-weight: 700; line-height: 41px; color: #f2f5fb; letter-spacing: -.08px; }
.tutorial { width: 164px; }
.register { width: 153px; }
.scrollbar { width: 17px; background: #f1f1f1; display: flex; flex-direction: column; align-items: center; }
.up, .down { border: 4px solid transparent; }
.up { border-bottom-color: #a3a3a3; border-top: 0; margin: 7px 0 6px; }
.thumb { width: 13px; height: 228px; background: #c1c1c1; }
.down { border-top-color: #505050; border-bottom: 0; margin: auto 0 7px; }

/* desktop taskbar */
.taskbar { height: 40px; flex: none; display: flex; align-items: center; background: linear-gradient(90deg, #2d3c42 0, #304047 330px, #46393a 440px, #46392f 560px, #272a27 660px, #252827 710px, #463a35 830px, #463a37 1280px, #3a3a40 1450px, #2d3c42 1640px, #2e3e43 100%); }
.thin { fill: none; stroke: #fff; stroke-width: 1.200; }
.sys { width: 146px; display: flex; justify-content: space-between; padding: 0 17px 0 16px; }
.apps { display: flex; height: 40px; }
.app { width: 49.050px; height: 40px; display: grid; place-items: center; position: relative; }
.app svg { width: 24px; height: 24px; }
.app .big { width: 28px; height: 28px; }
.app .card { width: 22px; height: 22px; }
.app text { font: 700 10.500px "Open Sans", sans-serif; fill: #fff; }
.app .dw { font-size: 12.500px; fill: #ff61f6; }
.hub { color: #fff; }
.run::after { content: ""; position: absolute; left: 4px; right: 5px; bottom: 0; height: 2px; background: #b6b1ae; }
.split::after { background: linear-gradient(90deg, #b6b1ae 31px, #817b79 31px); }
.current { background: #464342; }
.current::after { left: 0; right: 1px; }
.weather { display: flex; align-items: center; margin-left: auto; font-size: 14px; letter-spacing: -.2px; white-space: nowrap; }
.weather svg { width: 24px; height: 24px; margin-right: 8px; }
.weather span { margin-right: 9px; }
.tray { display: flex; align-items: center; gap: 9px; margin-left: 15px; font-size: 12px; }
.tray svg { width: 14px; height: 18px; }
.tray svg:nth-child(3) { width: 18px; }
.tray span { letter-spacing: -.3px; }
.clock { width: 66px; margin-left: 9px; display: flex; flex-direction: column; align-items: center; font-size: 12px; line-height: 18px; letter-spacing: -.35px; }
.notice { position: relative; width: 42px; height: 40px; margin: 0 4px 0 9px; border-right: 1px solid #7e8789; }
.notice svg { width: 26px; height: 26px; margin: 10px 0 0 4px; }
.notice b { position: absolute; left: 12px; top: 19px; width: 17px; height: 17px; border: 1px solid #8d9192; border-radius: 50%; background: #2b2f31; font-size: 11px; line-height: 15px; text-align: center; }
```
